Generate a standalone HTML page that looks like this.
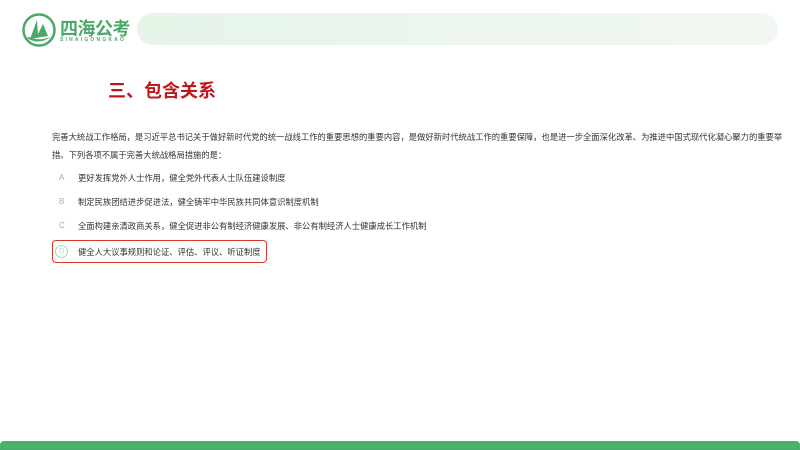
<!DOCTYPE html>
<html><head><meta charset="utf-8"><style>
body{margin:0;width:800px;height:450px;background:#fff;position:relative;overflow:hidden;font-family:"Liberation Sans","Noto Sans CJK SC",sans-serif}
.abs{position:absolute}
.pill{left:137px;top:13px;width:641px;height:32px;border-radius:16px;background:linear-gradient(90deg,#e6f4e8,#f1f8f1)}
.t{font-size:8.3px;color:#333;white-space:nowrap;line-height:10px}
.opt{font-size:8.3px;color:#333;white-space:nowrap}
.l{color:#aaa;font-size:8px}
</style></head><body>
<svg class="abs" style="left:21px;top:12px" width="36" height="36" viewBox="0 0 36 36">
<circle cx="18" cy="18" r="15.5" fill="none" stroke="#4aa868" stroke-width="2.5"/>
<path d="M9 27 L16 8 L17 22 L22 12 L27 24 Z" fill="#4aa868"/>
<path d="M6 26 Q18 34 31 24 Q20 30 8 25Z" fill="#4aa868"/>
</svg>
<div class="abs" style="left:60px;top:15px;font-size:18px;font-weight:bold;color:#4aa868;letter-spacing:-0.5px">四海公考</div>
<div class="abs" style="left:60px;top:37px;font-size:5px;font-weight:bold;color:#4aa868;letter-spacing:2.2px">SINAIGONGKAO</div>
<div class="abs pill"></div>
<div class="abs" style="left:108px;top:77px;font-size:18px;font-weight:bold;color:#c0171c">三、包含关系</div>
<div class="abs t" style="left:52px;top:132px">完善大统战工作格局，是习近平总书记关于做好新时代党的统一战线工作的重要思想的重要内容，是做好新时代统战工作的重要保障，也是进一步全面深化改革、为推进中国式现代化凝心聚力的重要举</div>
<div class="abs t" style="left:52px;top:150px">措。下列各项不属于完善大统战格局措施的是：</div>
<div class="abs l" style="left:59px;top:173px">A</div><div class="abs opt" style="left:78px;top:172px">更好发挥党外人士作用，健全党外代表人士队伍建设制度</div>
<div class="abs l" style="left:59px;top:197px">B</div><div class="abs opt" style="left:78px;top:196px">制定民族团结进步促进法，健全铸牢中华民族共同体意识制度机制</div>
<div class="abs l" style="left:59px;top:221px">C</div><div class="abs opt" style="left:78px;top:220px">全面构建亲清政商关系，健全促进非公有制经济健康发展、非公有制经济人士健康成长工作机制</div>
<div class="abs" style="left:52px;top:240px;width:213px;height:21px;border:1.5px solid #d9382e;border-radius:4px"></div>
<div class="abs" style="left:55px;top:245px;width:11px;height:11px;border:1px solid #9fd9b4;border-radius:50%;font-size:7px;color:#9fd9b4;text-align:center;line-height:11px">D</div>
<div class="abs opt" style="left:78px;top:246px">健全人大议事规则和论证、评估、评议、听证制度</div>
<div class="abs" style="left:0;top:441px;width:800px;height:9px;background:#48b26c;border-radius:4px 4px 0 0"></div>
</body></html>
